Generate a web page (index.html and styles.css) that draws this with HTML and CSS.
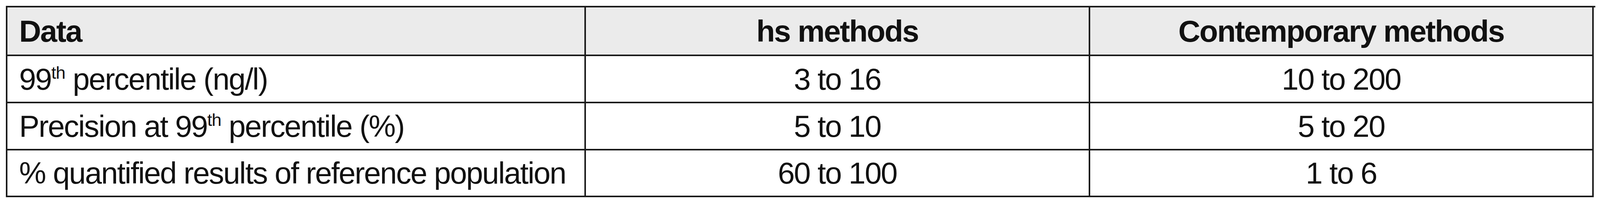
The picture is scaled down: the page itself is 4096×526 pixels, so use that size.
FILE: index.html
```html
<!DOCTYPE html>
<html lang="en">
<head>
<meta charset="utf-8">
<title>hs vs contemporary methods</title>
<link rel="stylesheet" href="styles.css">
</head>
<body>
<div class="table">
  <div class="cell head left"><span class="txt">Data</span></div>
  <div class="cell head"><span class="txt">hs methods</span></div>
  <div class="cell head"><span class="txt">Contemporary methods</span></div>

  <div class="cell left"><span class="txt">99<span class="sup">th</span> percentile (ng/l)</span></div>
  <div class="cell"><span class="txt">3 to 16</span></div>
  <div class="cell"><span class="txt">10 to 200</span></div>

  <div class="cell left"><span class="txt">Precision at 99<span class="sup">th</span> percentile (%)</span></div>
  <div class="cell"><span class="txt">5 to 10</span></div>
  <div class="cell"><span class="txt">5 to 20</span></div>

  <div class="cell left"><span class="txt">% quantified results of reference population</span></div>
  <div class="cell"><span class="txt">60 to 100</span></div>
  <div class="cell"><span class="txt">1 to 6</span></div>
</div>
</body>
</html>
```

FILE: styles.css
```css
html, body {
  margin: 0;
  padding: 0;
  background: #ffffff;
}

body {
  width: 4096px;
  height: 526px;
  overflow: hidden;
}

.table {
  margin: 15px 0 0 15px;
  display: grid;
  grid-template-columns: 1481px 1291px 1289px;
  grid-template-rows: 125px 121px 121px 120px;
  width: 4065px;
  border-top: 4px solid #1a1a1a;
  border-left: 4px solid #1a1a1a;
  font-family: "Liberation Sans", Arial, Helvetica, sans-serif;
  font-size: 78px;
  letter-spacing: -2.3px;
  color: #111111;
}

.cell {
  box-sizing: border-box;
  border-right: 4px solid #1a1a1a;
  border-bottom: 4px solid #1a1a1a;
  display: flex;
  align-items: center;
  justify-content: center;
  white-space: nowrap;
  line-height: 1;
}

.cell.left {
  justify-content: flex-start;
  padding-left: 30px;
}

.cell.head {
  background: #ebebeb;
  font-weight: bold;
}

.txt {
  display: block;
}

.sup {
  font-size: 0.58em;
  letter-spacing: -1px;
  position: relative;
  top: -0.6em;
}
```
